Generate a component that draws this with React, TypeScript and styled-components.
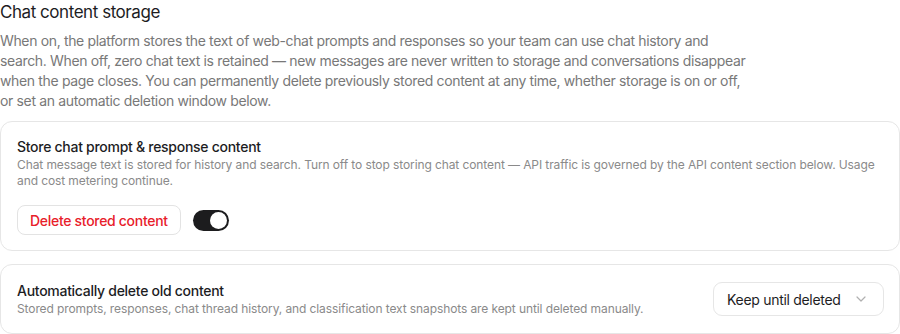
import React, { useState } from "react";
import styled, { createGlobalStyle } from "styled-components";

const Global = createGlobalStyle`
  html, body { margin: 0; padding: 0; background: #ffffff; }
  body { font-family: Inter, "Noto Sans", "Liberation Sans", sans-serif; -webkit-font-smoothing: antialiased; }
  * { box-sizing: border-box; }
`;

const Section = styled.section`
  width: 900px;
  display: flex;
  flex-direction: column;
`;

const Heading = styled.h2`
  margin: 0;
  font-size: 17px;
  line-height: 24px;
  font-weight: 400;
  color: #1d1d1f;
  letter-spacing: -0.45px;
`;

const Intro = styled.p`
  margin: 7px 0 10px;
  max-width: 748px;
  font-size: 14px;
  line-height: 20px;
  color: #787878;
  letter-spacing: -0.35px;
`;

const Cards = styled.div`
  display: flex;
  flex-direction: column;
  gap: 13px;
`;

const Card = styled.div<{ $row?: boolean }>`
  border: 1px solid #e6e6e6;
  border-radius: 12px;
  padding: ${(p) => (p.$row ? "16px 15px 16px 16px" : "15px 15px 15px 16px")};
  display: flex;
  flex-direction: ${(p) => (p.$row ? "row" : "column")};
  align-items: ${(p) => (p.$row ? "center" : "stretch")};
  justify-content: space-between;
  gap: 16px;
`;

const TextBlock = styled.div`
  display: flex;
  flex-direction: column;
  min-width: 0;
`;

const Title = styled.div`
  font-size: 14px;
  line-height: 20px;
  font-weight: 500;
  color: #1d1d1f;
  letter-spacing: -0.28px;
`;

const Desc = styled.div`
  font-size: 12px;
  line-height: 16px;
  color: #8a8a8a;
  letter-spacing: -0.1px;
`;

const Actions = styled.div`
  display: flex;
  align-items: center;
  gap: 12px;
`;

const DangerButton = styled.button`
  height: 30px;
  padding: 0 12px;
  border: 1px solid #e3e3e3;
  border-radius: 8px;
  background: #fff;
  color: #e8202a;
  font-family: inherit;
  font-size: 14px;
  font-weight: 500;
  letter-spacing: -0.3px;
  cursor: pointer;
`;

const Switch = styled.button<{ $on: boolean }>`
  width: 36px;
  height: 21px;
  border: none;
  border-radius: 11px;
  padding: 2px;
  background: ${(p) => (p.$on ? "#1c1c1e" : "#d4d4d4")};
  display: flex;
  justify-content: ${(p) => (p.$on ? "flex-end" : "flex-start")};
  align-items: center;
  cursor: pointer;
`;

const Knob = styled.span`
  width: 17px;
  height: 17px;
  border-radius: 50%;
  background: #fff;
`;

const Select = styled.div`
  flex: none;
  width: 171px;
  height: 34px;
  border: 1px solid #e6e6e6;
  border-radius: 9px;
  padding: 0 17px 0 13px;
  display: flex;
  align-items: center;
  justify-content: space-between;
  font-size: 14px;
  letter-spacing: -0.3px;
  color: #1d1d1f;
`;

export default function App() {
  const [on, setOn] = useState(true);
  return (
    <>
      <Global />
      <Section>
        <Heading>Chat content storage</Heading>
        <Intro>
          When on, the platform stores the text of web-chat prompts and responses so your team can use chat history and
          search. When off, zero chat text is retained — new messages are never written to storage and conversations
          disappear when the page closes. You can permanently delete previously stored content at any time, whether
          storage is on or off, or set an automatic deletion window below.
        </Intro>
        <Cards>
          <Card>
            <TextBlock>
              <Title>Store chat prompt &amp; response content</Title>
              <Desc>
                Chat message text is stored for history and search. Turn off to stop storing chat content — API traffic
                is governed by the API content section below. Usage and cost metering continue.
              </Desc>
            </TextBlock>
            <Actions>
              <DangerButton>Delete stored content</DangerButton>
              <Switch $on={on} onClick={() => setOn(!on)} aria-label="Store chat content">
                <Knob />
              </Switch>
            </Actions>
          </Card>
          <Card $row>
            <TextBlock>
              <Title>Automatically delete old content</Title>
              <Desc>
                Stored prompts, responses, chat thread history, and classification text snapshots are kept until
                deleted manually.
              </Desc>
            </TextBlock>
            <Select>
              <span>Keep until deleted</span>
              <svg width="10" height="6" viewBox="0 0 10 6" fill="none">
                <path d="M1 1l4 4 4-4" stroke="#b0b0b0" strokeWidth="1.2" strokeLinecap="round" strokeLinejoin="round" />
              </svg>
            </Select>
          </Card>
        </Cards>
      </Section>
    </>
  );
}
